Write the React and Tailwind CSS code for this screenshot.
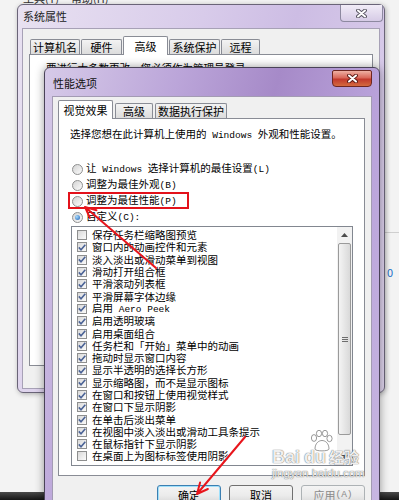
const FONT = "font-['Noto_Sans_CJK_SC','Liberation_Sans',sans-serif]";

const effects = [
  ["保存任务栏缩略图预览", false],
  ["窗口内的动画控件和元素", true],
  ["淡入淡出或滑动菜单到视图", true],
  ["滑动打开组合框", true],
  ["平滑滚动列表框", true],
  ["平滑屏幕字体边缘", true],
  ["启用 Aero Peek", true],
  ["启用透明玻璃", true],
  ["启用桌面组合", true],
  ["任务栏和「开始」菜单中的动画", true],
  ["拖动时显示窗口内容", true],
  ["显示半透明的选择长方形", true],
  ["显示缩略图，而不是显示图标", true],
  ["在窗口和按钮上使用视觉样式", true],
  ["在窗口下显示阴影", true],
  ["在单击后淡出菜单", true],
  ["在视图中淡入淡出或滑动工具条提示", true],
  ["在鼠标指针下显示阴影", true],
  ["在桌面上为图标标签使用阴影", false],
];

const radios = [
  ["让 Windows 选择计算机的最佳设置(L)", false],
  ["调整为最佳外观(B)", false],
  ["调整为最佳性能(P)", false],
  ["自定义(C):", true],
];

// latin runs are drawn in a half-width mono face, like SimSun
function Mixed({ text }) {
  return text.split(/([\x20-\x7e]+)/).map((part, i) =>
    /[\x20-\x7e]/.test(part) ? (
      <span key={i} className="whitespace-pre font-['Liberation_Mono',monospace] text-[9.5px]">
        {part}
      </span>
    ) : (
      part
    )
  );
}

function CloseX({ active }) {
  return (
    <svg width="11" height="9" viewBox="0 0 11 9">
      <path d="M2 1.5 L9 7.5 M9 1.5 L2 7.5" stroke={active ? "#5c1a14" : "#55525f"} strokeWidth="3.8" strokeLinecap="round" fill="none" />
      <path d="M2 1.5 L9 7.5 M9 1.5 L2 7.5" stroke="#ffffff" strokeWidth="2" strokeLinecap="round" fill="none" />
    </svg>
  );
}

function Check({ on }) {
  return (
    <span className="flex h-[10px] w-[10px] shrink-0 items-center justify-center border border-[#8e8f8f] bg-linear-to-br from-[#d9d9d9] to-[#fbfbfb]">
      {on && (
        <svg width="8" height="7" viewBox="0 0 8 7">
          <path d="M0.8 3.4 L3 5.8 L7.3 0.8" fill="none" stroke="#4b6396" strokeWidth="1.6" />
        </svg>
      )}
    </span>
  );
}

function Radio({ on }) {
  return (
    <span className="flex h-[11px] w-[11px] shrink-0 items-center justify-center rounded-full border border-[#8e8f8f] bg-linear-to-br from-[#d4d4d4] to-[#fbfbfb]">
      {on && <span className="h-[5px] w-[5px] rounded-full bg-[radial-gradient(circle_at_35%_35%,#a8dcff,#1b5eb2)]" />}
    </span>
  );
}

function Tab({ label, sel, w }) {
  if (sel) {
    return (
      <div className={`relative z-10 -mb-px flex h-[19px] items-center justify-center rounded-t-[2px] border border-b-0 border-[#898c95] bg-white text-[11px] ${w}`}>
        {label}
      </div>
    );
  }
  return (
    <div className={`flex h-[15px] items-center justify-center rounded-t-[2px] border border-b-0 border-[#898c95] bg-linear-to-b from-[#f3f3f3] to-[#dcdcdc] text-[11px] ${w}`}>
      {label}
    </div>
  );
}

function Button({ children, kind }) {
  const look =
    kind === "default"
      ? "border-[#3c7fb1] shadow-[inset_0_0_0_1px_#9fe0fb] text-black"
      : kind === "disabled"
      ? "border-[#adb2b5] text-[#8a8a8a]"
      : "border-[#707070] text-black";
  return (
    <div className={`flex h-[21px] w-[64px] items-center justify-center rounded-[3px] border bg-linear-to-b from-[#f4f4f4] via-[#ebebeb] to-[#d4d4d4] text-[11px] ${look}`}>
      {children}
    </div>
  );
}

function SystemProperties() {
  return (
    <div className="absolute left-[17px] top-[4px] h-[389px] w-[368px] rounded-[6px] border border-[#6a6478] bg-[linear-gradient(105deg,#e8e1f1_0%,#d8cbea_40%,#cdbde4_60%,#dfd4ed_100%)] shadow-[1px_1px_5px_rgba(0,0,0,0.3)]">
      <div className="flex h-[23px] items-center pl-[5px] text-[11px] text-[#222]">系统属性</div>
      <div className="absolute right-[1px] top-0 flex h-[17px] w-[43px] items-center justify-center rounded-b-[4px] border border-t-0 border-[#8d89a0] bg-linear-to-b from-[#f1ecf7] to-[#d6cbe6]">
        <CloseX />
      </div>
      <div className="mx-[4px] h-[361px] border border-[#a7a1b6] bg-[#f0f0f0] pl-[6px] pt-[7px]">
        <div className="flex items-end gap-[1px] pl-[1px]">
          <Tab label="计算机名" w="w-[50px]" />
          <Tab label="硬件" w="w-[41px]" />
          <Tab label="高级" w="w-[45px]" sel />
          <Tab label="系统保护" w="w-[51px]" />
          <Tab label="远程" w="w-[39px]" />
        </div>
        <div className="h-[312px] w-[344px] border border-[#898c95] bg-white pl-[16px] pt-[6px]">
          <p className="h-[14px] text-[10.5px] leading-[14px]">要进行大多数更改，您必须作为管理员登录。</p>
        </div>
      </div>
    </div>
  );
}

function PerformanceOptions() {
  return (
    <div className="absolute left-[44px] top-[67px] h-[450px] w-[336px] rounded-t-[6px] border border-[#4a4358] bg-[linear-gradient(105deg,#d6cae8_0%,#bba5d9_30%,#a68ac8_52%,#b9a2da_75%,#c8b7e2_100%)] shadow-[0_0_10px_rgba(0,0,0,0.4)]">
      <div className="flex h-[28px] items-center pl-[8px] pt-[2px] text-[11px] text-[#111]">性能选项</div>
      <div className="absolute right-[7px] top-[2px] flex h-[17px] w-[40px] items-center justify-center rounded-b-[4px] rounded-t-[2px] border border-[#6e2620] bg-[linear-gradient(180deg,#eeb0a3_0%,#d9685a_45%,#c2392c_55%,#d46a3e_100%)]">
        <CloseX active />
      </div>
      <div className="mx-[7px] h-[440px] border border-[#a39bb3] bg-[#f0f0f0] pl-[5px] pt-[3px]">
        <div className="flex items-end gap-[2px]">
          <Tab label="视觉效果" w="w-[55px]" sel />
          <Tab label="高级" w="w-[38px]" />
          <Tab label="数据执行保护" w="w-[72px]" />
        </div>
        <div className="h-[358px] w-[307px] border border-[#898c95] bg-white pl-[11px] pt-[8px]">
          <p className="h-[14px] text-[10.5px] leading-[14px]">
            <Mixed text="选择您想在此计算机上使用的 Windows 外观和性能设置。" />
          </p>
          <div className="mt-[20px] flex flex-col pl-[2px]">
            {radios.map(([label, on]) => (
              <div key={label} className="flex h-[16px] items-center gap-[3px] text-[10.5px] leading-[12px]">
                <Radio on={on} />
                <span>
                  <Mixed text={label} />
                </span>
              </div>
            ))}
          </div>
          <div className="ml-[1px] mt-[1px] flex h-[240px] w-[282px] border border-[#828790] bg-white">
            <div className="flex flex-1 flex-col pl-[5px] pt-[2px]">
              {effects.map(([label, on]) => (
                <div key={label} className="flex h-[12.3px] items-center gap-[5px] text-[10.5px] leading-[12px]">
                  <Check on={on} />
                  <span className="whitespace-nowrap">
                    <Mixed text={label} />
                  </span>
                </div>
              ))}
            </div>
            <div className="flex w-[15px] flex-col bg-[#f2f2f2]">
              <div className="flex h-[16px] items-center justify-center">
                <svg width="7" height="4" viewBox="0 0 7 4"><path d="M0 4 L3.5 0 L7 4 Z" fill="#4d4d4d" /></svg>
              </div>
              <div className="mx-[1px] flex h-[192px] items-center justify-center rounded-[2px] border border-[#9a9a9a] bg-linear-to-r from-[#f4f4f4] to-[#d9d9d9]">
                <div className="flex flex-col gap-[1px]">
                  <span className="h-px w-[6px] bg-[#6d6d6d]" />
                  <span className="h-px w-[6px] bg-[#6d6d6d]" />
                  <span className="h-px w-[6px] bg-[#6d6d6d]" />
                </div>
              </div>
              <div className="flex-1" />
              <div className="flex h-[16px] items-center justify-center">
                <svg width="7" height="4" viewBox="0 0 7 4"><path d="M0 0 L3.5 4 L7 0 Z" fill="#4d4d4d" /></svg>
              </div>
            </div>
          </div>
        </div>
        <div className="mt-[9px] flex w-[307px] justify-end gap-[8px]">
          <Button kind="default">确定</Button>
          <Button>取消</Button>
          <Button kind="disabled">
            应用<span className="font-['Liberation_Mono',monospace] text-[9.5px]">(A)</span>
          </Button>
        </div>
      </div>
    </div>
  );
}

function Watermark() {
  const shade = "[text-shadow:0_0_1px_rgba(70,70,70,0.8),0_0_1px_rgba(70,70,70,0.6)]";
  return (
    <div className="pointer-events-none absolute left-[272px] top-[430px] flex flex-col text-white/90">
      <svg className="ml-[36px]" width="26" height="22" viewBox="0 0 26 22">
        <g fill="rgba(255,255,255,0.8)" stroke="rgba(110,110,110,0.7)" strokeWidth="1">
          <ellipse cx="6" cy="8" rx="2.6" ry="3.4" />
          <ellipse cx="11" cy="3.5" rx="2.6" ry="3.2" />
          <ellipse cx="17" cy="3.5" rx="2.6" ry="3.2" />
          <ellipse cx="21.5" cy="8.5" rx="2.6" ry="3.2" />
          <path d="M7 19 C7 13 11 10.5 14 10.5 C17 10.5 21 13 21 19 C21 21.5 7 21.5 7 19 Z" />
        </g>
      </svg>
      <div className={`-mt-[4px] flex items-end font-['Liberation_Sans',sans-serif] font-bold ${shade}`}>
        <span className="text-[18px] leading-[18px]">Bai</span>
        <span className="ml-[4px] text-[18px] leading-[18px]">du</span>
        <span className={`ml-[3px] text-[15px] leading-[18px] ${FONT}`}>经验</span>
      </div>
      <span className={`mt-[1px] font-['Liberation_Sans',sans-serif] text-[11.5px] leading-[12px] ${shade}`}>jingyan.baidu.com</span>
    </div>
  );
}

export default function App() {
  return (
    <div className={`relative h-[500px] w-[399px] overflow-hidden bg-[#f3f3f3] text-black ${FONT}`}>
      <div className="absolute left-[23px] top-[-10px] flex gap-[12px] text-[11px] text-[#333]">
        <span>工具(T)</span>
        <span>帮助(H)</span>
      </div>
      <div className="absolute left-[385px] top-[232px] h-px w-[14px] bg-[#cfcfcf]" />
      <span className="absolute left-[387px] top-[264px] text-[11px] text-[#1e6fc8]">0</span>
      <div className="absolute bottom-0 left-0 h-[8px] w-full bg-linear-to-b from-[#4a4a4a] to-[#151515]" />

      <SystemProperties />
      <PerformanceOptions />

      <div className="pointer-events-none absolute left-[68px] top-[192px] h-[17px] w-[121px] border-2 border-[#e3121b]" />
      <svg className="pointer-events-none absolute left-0 top-0" width="399" height="500" viewBox="0 0 399 500">
        <g stroke="#e8151c" strokeWidth="2" fill="none" strokeLinecap="round">
          <path d="M156 268 L85 207 M85 207 L96.5 210.2 M85 207 L89.9 217.9" />
          <path d="M245 437 L197 494 M197 494 L207.9 489 M197 494 L200.1 482.4" />
        </g>
      </svg>
      <Watermark />
    </div>
  );
}
